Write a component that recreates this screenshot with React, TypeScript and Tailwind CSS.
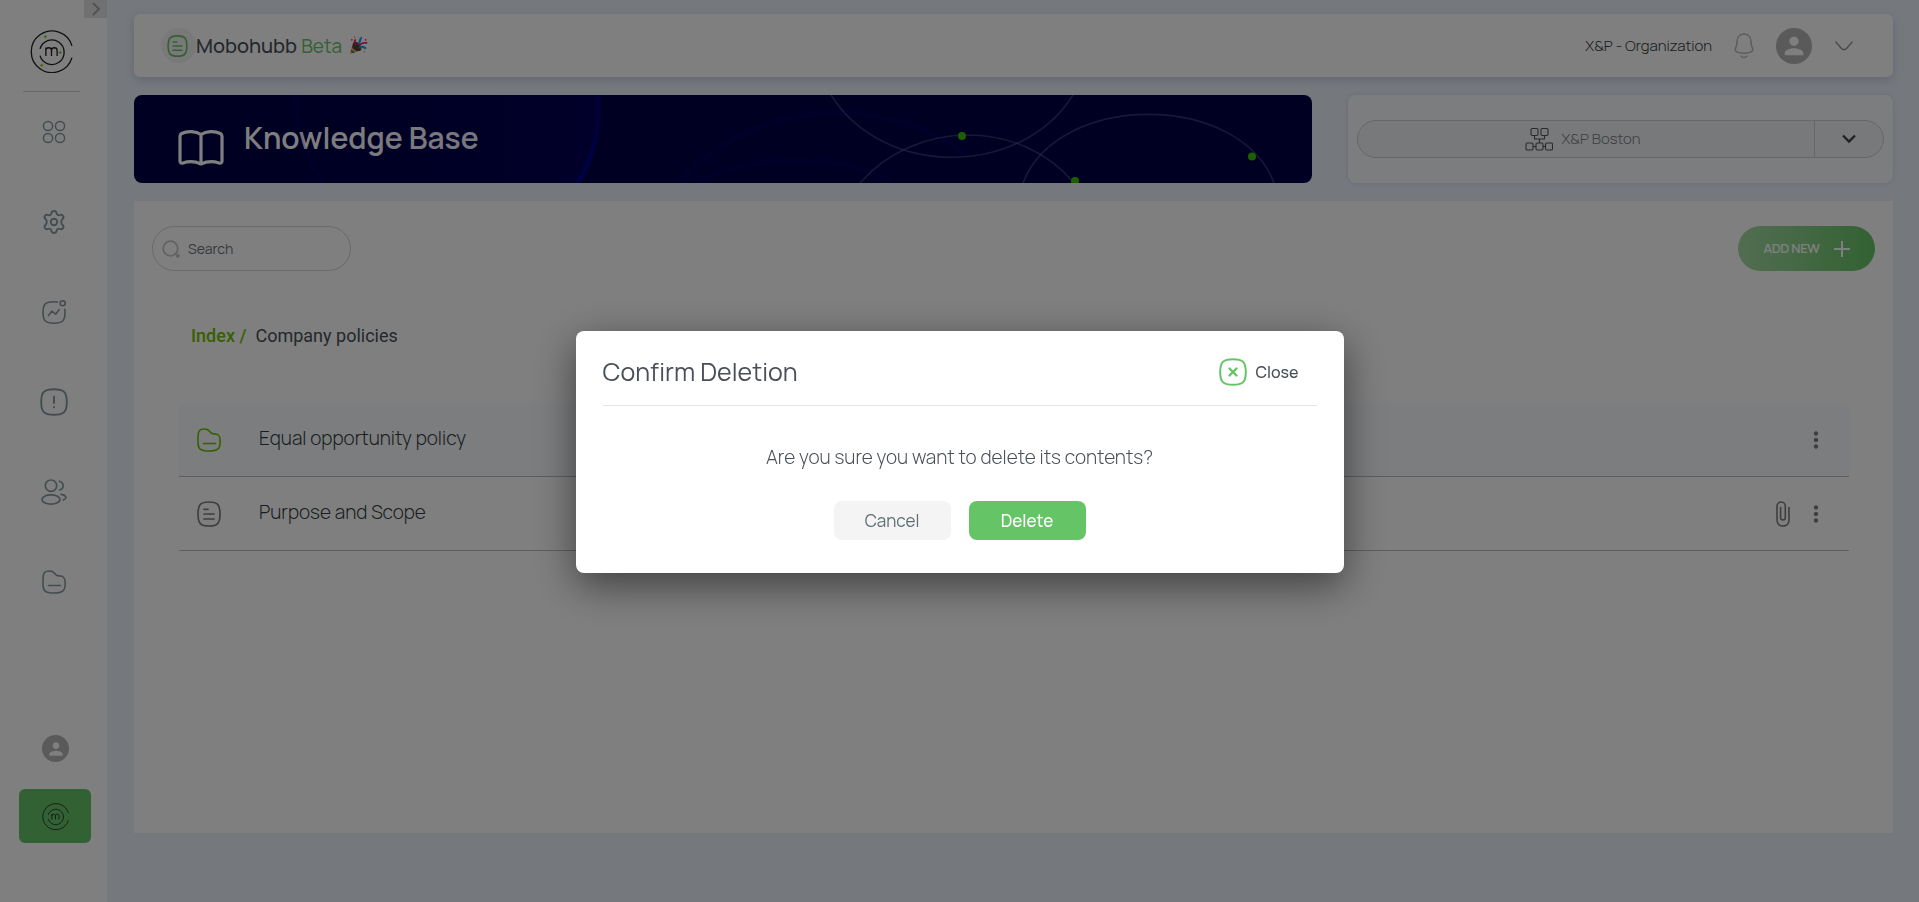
import React from "react";
import { MdPerson, MdMoreVert } from "react-icons/md";

const FONT = "font-['Manrope','Inter','Liberation_Sans',sans-serif]";

type IconProps = { className?: string };

function Logo({ className, accents = true }: IconProps & { accents?: boolean }) {
  return (
    <svg viewBox="0 0 42 42" className={className} fill="none" stroke="currentColor" strokeWidth="1.3" aria-hidden="true">
      <path d="M41 15.500A20.300 20.300 0 1 0 41 27" />
      <path d="M9.800 18.500A12 12 0 1 1 9.800 25" />
      <path d="M15.500 25.500v-8.500M15.500 20c0-3.500 5.500-3.500 5.500 0v5.500M21 20c0-3.500 5.500-3.500 5.500 0v5.500" />
      {accents && (
        <path d="M15 5v3M13.500 6.500h3M11.500 33v3M10 34.500h3M29.500 20.500v3M28 22h3" stroke="#7cc31a" strokeWidth="1" />
      )}
    </svg>
  );
}

function DocIcon({ className, weight = 1.7 }: IconProps & { weight?: number }) {
  return (
    <svg viewBox="0 0 24 26" className={className} fill="none" stroke="currentColor" strokeWidth={weight} strokeLinecap="round" aria-hidden="true">
      <path d="M12 1C20.500 1 23 3.500 23 13S20.500 25 12 25 1 22.500 1 13 3.500 1 12 1Z" />
      <path d="M7 8.300h4M7 13h10M7 18h10" />
    </svg>
  );
}

function FolderIcon({ className }: IconProps) {
  return (
    <svg viewBox="0 0 24 24" className={className} fill="none" stroke="currentColor" strokeWidth="1.6" strokeLinecap="round" strokeLinejoin="round" aria-hidden="true">
      <path d="M1 9C1 3 2.500 1 7.500 1c3.500 0 4.500 1.200 5.700 3 1 1.400 1.800 1.900 4 1.900 4.500 0 6 2 6 7.600 0 7-2.200 9.500-11.200 9.500S1 20.500 1 15Z" />
      <path d="M6.500 15.500h12" />
    </svg>
  );
}

function GridIcon({ className }: IconProps) {
  return (
    <svg viewBox="0 0 24 24" className={className} fill="none" stroke="currentColor" strokeWidth="1.500" aria-hidden="true">
      <circle cx="6" cy="6" r="4.600" />
      <circle cx="18" cy="6" r="4.600" />
      <circle cx="6" cy="18" r="4.600" />
      <circle cx="18" cy="18" r="4.600" />
    </svg>
  );
}

function GearIcon({ className }: IconProps) {
  return (
    <svg viewBox="0 0 24 24" className={className} fill="none" stroke="currentColor" strokeWidth="1.900" strokeLinejoin="round" aria-hidden="true">
      <circle cx="12" cy="12" r="3.200" />
      <path d="M9.400 3.200C9.700 1.500 10.700 1 12 1s2.300.500 2.600 2.200c.300 1.800 1.600 2.500 3.200 1.800 1.600-.700 2.600-.300 3.300.900s.600 2.300-.800 3.300c-1.400 1.100-1.400 4.500 0 5.600 1.400 1 1.500 2.100.800 3.300s-1.700 1.600-3.300.900c-1.600-.700-2.900 0-3.200 1.800C14.300 22.500 13.300 23 12 23s-2.300-.500-2.600-2.200c-.300-1.800-1.600-2.500-3.200-1.800-1.600.700-2.600.300-3.300-.900s-.600-2.300.800-3.300c1.400-1.100 1.400-4.500 0-5.600-1.400-1-1.500-2.100-.800-3.300s1.700-1.600 3.300-.900c1.600.700 2.900 0 3.200-1.800Z" />
    </svg>
  );
}

function ActivityIcon({ className }: IconProps) {
  return (
    <svg viewBox="0 0 24 24" className={className} fill="none" stroke="currentColor" strokeWidth="1.600" strokeLinecap="round" strokeLinejoin="round" aria-hidden="true">
      <path d="M15.500 2C14.500 1.800 13.300 1.700 12 1.700 3.500 1.700 1 4 1 12.500S3.500 23.200 12 23.200s11-2.200 11-10.700c0-1.200 0-2.300-.200-3.200" />
      <circle cx="20.700" cy="3.300" r="2.500" />
      <path d="m6.500 15.500 3.300-4.300 3.900 3 3.500-4.600" />
    </svg>
  );
}

function AlertIcon({ className }: IconProps) {
  return (
    <svg viewBox="0 0 28 28" className={className} fill="none" stroke="currentColor" strokeWidth="1.900" strokeLinecap="round" aria-hidden="true">
      <path d="M14 1.200C24 1.200 26.800 4 26.800 14S24 26.800 14 26.800 1.200 24 1.200 14 4 1.200 14 1.200Z" />
      <path d="M14 8.500v6.500M14 19v.200" />
    </svg>
  );
}

function UsersIcon({ className }: IconProps) {
  return (
    <svg viewBox="0 0 26 26" className={className} fill="none" stroke="currentColor" strokeWidth="1.700" strokeLinecap="round" aria-hidden="true">
      <circle cx="10" cy="6.700" r="5.700" />
      <ellipse cx="10" cy="20.500" rx="9" ry="4.600" />
      <path d="M18.500 2.200c4.800 1.500 4.800 7.700.200 8.800M20 15.300c5.600.600 6.300 4.200 2.300 5.700" />
    </svg>
  );
}

function OrgIcon({ className }: IconProps) {
  return (
    <svg viewBox="0 0 28 26" className={className} fill="none" stroke="currentColor" strokeWidth="1.100" aria-hidden="true">
      <rect x="6" y="2.500" width="7" height="7" rx="1.200" />
      <rect x="16" y="2.500" width="7" height="7" rx="1.200" />
      <rect x="1" y="17" width="7" height="7" rx="1.200" />
      <rect x="11" y="17" width="7" height="7" rx="1.200" />
      <rect x="20.500" y="17" width="7" height="7" rx="1.200" />
      <path d="M9.500 9.500v3.500h10V9.500M14.500 13v4M8 20.500h3M18 20.500h2.500" />
    </svg>
  );
}

function BookIcon({ className }: IconProps) {
  return (
    <svg viewBox="0 0 46 36" className={className} fill="none" stroke="currentColor" strokeWidth="3.200" strokeLinejoin="round" aria-hidden="true">
      <path d="M23 4.500C18 1 9 .800 3.700 3.500 2.500 4.200 2 5 2 6.200V31c0 2 1.300 2.600 3 2 5.500-1.800 12.500-1.500 18 1 5.500-2.500 12.500-2.800 18-1 1.700.600 3 0 3-2V6.200c0-1.200-.500-2-1.700-2.700C37 .800 28 1 23 4.500ZM23 4.500V34" />
    </svg>
  );
}

function BellIcon({ className }: IconProps) {
  return (
    <svg viewBox="0 0 20 26" className={className} fill="none" stroke="currentColor" strokeWidth="1.500" strokeLinecap="round" aria-hidden="true">
      <path d="M10 1C5.500 1 3 4.300 3 8.500c0 3.500-.500 4.500-1.400 6.500C.200 18.500 3.500 20.300 10 20.300s9.800-1.800 8.400-5.300C17.500 13 17 12 17 8.500 17 4.300 14.500 1 10 1Z" />
      <path d="M7.200 23.300c1.500 1.500 4.100 1.500 5.600 0" />
    </svg>
  );
}

function PartyIcon({ className }: IconProps) {
  return (
    <svg viewBox="0 0 20 20" className={className} aria-hidden="true">
      <path d="M4 8 1 19 12 15Z" fill="#f5b32d" />
      <path d="M3.500 10 10 15.500l-2.200.8L3 12.300ZM2.300 14.500l4 2.900-2 .7-2.400-2Z" fill="#4a5f9e" />
      <ellipse cx="8.500" cy="11" rx="3.600" ry="5.600" transform="rotate(-42 8.500 11)" fill="#6b3a1e" />
      <path d="M7.500 9.500C5.500 7 5.500 5 7 3.500M10.500 10.500c2-3 5-4 8.700-3" fill="none" stroke="#e8177d" strokeWidth="1.700" />
      <path d="M9.500 8.500C13 7 10 3.500 13.500 1.500M11 12.500c2-2 5-1 6.800 1" fill="none" stroke="#14a4e8" strokeWidth="2.300" />
      <circle cx="3" cy="4" r=".9" fill="#e8177d" />
      <circle cx="17.500" cy="4" r=".9" fill="#e8177d" />
      <circle cx="6" cy="1.200" r=".9" fill="#f5b32d" />
      <circle cx="16" cy="16.500" r=".9" fill="#f5b32d" />
    </svg>
  );
}

function ClipIcon({ className }: IconProps) {
  return (
    <svg viewBox="0 0 14 26" className={className} fill="none" stroke="currentColor" strokeWidth="1.600" strokeLinecap="round" aria-hidden="true">
      <path d="M13 6.500V19c0 3.500-2.500 6-6 6s-6-2.500-6-6V5.200C1 2.800 2.800 1 5 1s4.300 1.800 4.300 4.200v11.600c0 1.200-1 2.200-2.300 2.200s-2.400-1-2.400-2.200V6.500" />
    </svg>
  );
}

function BannerArt({ className }: IconProps) {
  return (
    <svg viewBox="0 0 1178 88" preserveAspectRatio="none" className={className} fill="none" aria-hidden="true">
      <defs>
        <linearGradient id="glow" x1="0" x2="1">
          <stop offset="0" stopColor="#0000a0" stopOpacity="0" />
          <stop offset="1" stopColor="#0000c8" stopOpacity=".2" />
        </linearGradient>
        <linearGradient id="edge" x1="0" x2="0" y1="0" y2="1">
          <stop offset="0" stopColor="#0000c8" stopOpacity=".25" />
          <stop offset="1" stopColor="#0000d8" stopOpacity=".55" />
        </linearGradient>
      </defs>
      <path d="M162 0c0 30 6 62 28 88h252c16-24 24-58 24-88Z" fill="url(#glow)" opacity=".6" />
      <path d="M162 0c0 30 6 62 28 88" stroke="#0000a8" strokeOpacity=".14" strokeWidth="4" />
      <path d="M465 0c1 34-5 64-22 88" stroke="url(#edge)" strokeWidth="4" />
      <path d="M545 88C620 0 760 0 830 60M560 88c60-30 150-30 200 0" stroke="#0000a0" strokeOpacity=".12" strokeWidth="6" />
      <g stroke="#5c6496" strokeOpacity=".5" strokeWidth="1.600">
        <path d="M697 0c52 83 190 83 242 0" />
        <path d="M726 88c56-64 161-64 214 0" />
        <path d="M889 88c34-91 216-92 251 0" />
      </g>
      <g fill="#36c000">
        <circle cx="828" cy="41" r="4" />
        <circle cx="1118" cy="61.500" r="4" />
        <circle cx="941" cy="86" r="4" />
      </g>
    </svg>
  );
}

const NAV = [
  { label: "Dashboard", icon: <GridIcon className="size-6" /> },
  { label: "Settings", icon: <GearIcon className="size-6" /> },
  { label: "Activity", icon: <ActivityIcon className="size-6" /> },
  { label: "Alerts", icon: <AlertIcon className="size-7" /> },
  { label: "People", icon: <UsersIcon className="size-[26px]" /> },
  { label: "Files", icon: <FolderIcon className="size-6" /> },
];

function Sidebar() {
  return (
    <aside className="relative flex w-[107px] shrink-0 flex-col bg-white">
      <button aria-label="Expand menu" className="absolute right-0 top-0 flex h-[18px] w-[23px] items-center justify-center bg-[#e3e3e3] text-[#a4a4a4]">
        <svg viewBox="0 0 10 14" className="h-3.5 w-2.5" fill="none" stroke="currentColor" strokeWidth="2" aria-hidden="true">
          <path d="m2 1 6 6-6 6" />
        </svg>
      </button>
      <a href="#" aria-label="Home" className="ml-[30px] mt-[30px] self-start text-[#222]">
        <Logo className="size-[43px]" />
      </a>
      <hr className="ml-[23px] mt-[18px] w-[57px] border-[#cfd3d6]" />
      <nav className="mt-[18px] flex flex-col gap-[46px] text-[#869aa1]">
        {NAV.map((n) => (
          <a key={n.label} href="#" aria-label={n.label} className="ml-8 flex size-11 items-center justify-center self-start">
            {n.icon}
          </a>
        ))}
      </nav>
      <div className="mt-auto flex flex-col items-start pb-[59px]">
        <a href="#" aria-label="Account" className="ml-[42px] flex size-[27px] items-center justify-center rounded-full bg-[#b4b4b4] text-white">
          <MdPerson className="size-5" />
        </a>
        <a href="#" aria-label="Workspace" className="ml-[19px] mt-[27px] flex h-[54px] w-[72px] items-center justify-center rounded-md bg-[#65c466] text-[#222]">
          <Logo accents={false} className="size-[27px]" />
        </a>
      </div>
    </aside>
  );
}

function Header() {
  return (
    <header className="flex h-[63px] items-center rounded-md bg-white px-[27px] shadow-[0_3px_8px_rgba(120,135,155,0.3)]">
      <span className="flex size-[35px] items-center justify-center rounded-full bg-[#f2f2f2] pr-0.5 text-[#65c466]">
        <DocIcon weight={2} className="h-[22px] w-[21px]" />
      </span>
      <p className="text-[20px] font-medium leading-7 text-[#495057]">
        Mobohubb <span className="text-[19px] font-normal text-[#65c466]">Beta</span>
      </p>
      <PartyIcon className="ml-[7px] size-[19px]" />
      <div className="ml-auto flex items-center">
        <span className="text-[15px] font-light leading-5 text-[#343a40]">X&amp;P - Organization</span>
        <button aria-label="Notifications" className="ml-[22px] text-[#b8b8b8]">
          <BellIcon className="h-[26px] w-5" />
        </button>
        <button aria-label="Profile" className="ml-[22px] flex size-9 items-center justify-center rounded-full bg-[#b4b4b4] text-white">
          <MdPerson className="size-7" />
        </button>
        <button aria-label="Open profile menu" className="ml-[23px] mr-[13px] text-[#8b979e]">
          <svg viewBox="0 0 18 10" className="h-2.5 w-[18px]" fill="none" stroke="currentColor" strokeWidth="1.400" strokeLinecap="round" aria-hidden="true">
            <path d="m1 1 5 6c2 2.300 4 2.300 6 0l5-6" />
          </svg>
        </button>
      </div>
    </header>
  );
}

function Row({ icon, name, active, clip }: { icon: React.ReactNode; name: string; active?: boolean; clip?: boolean }) {
  return (
    <li className={`flex h-[74px] items-center border-b border-[#bcbcbc] pl-[17px] pr-5 ${active ? "bg-[#f7fafd]" : ""}`}>
      <span className="flex w-[26px] justify-center">{icon}</span>
      <a href="#" className="ml-[37px] pb-1 text-[19px] font-light leading-6 text-[#343a40]">{name}</a>
      <div className="ml-auto flex items-center gap-[13px] text-[#7c7c7c]">
        {clip && <button aria-label="Attachment"><ClipIcon className="h-[26px] w-3.5" /></button>}
        <button aria-label={`Actions for ${name}`}><MdMoreVert className="size-[26px]" /></button>
      </div>
    </li>
  );
}

function Dialog() {
  return (
    <div className="fixed inset-0 flex items-start justify-center bg-black/50 pt-[331px]">
      <section role="dialog" aria-modal="true" aria-labelledby="dialog-title" className="w-full max-w-3xl rounded-lg bg-white px-[27px] pb-[33px] shadow-[0_12px_40px_rgba(0,0,0,0.5)]">
        <div className="flex h-[75px] items-center justify-between border-b border-[#e4e4e4] pt-2">
          <h2 id="dialog-title" className="text-[25px] leading-8 text-[#495057]">Confirm Deletion</h2>
          <button className="mr-[18px] flex items-center gap-[9px] text-[16px] font-medium leading-6 text-[#495057]">
            <svg viewBox="0 0 28 28" className="size-7 text-[#65c466]" fill="none" stroke="currentColor" strokeLinecap="round" aria-hidden="true">
              <path d="M14 1.200C24 1.200 26.800 4 26.800 14S24 26.800 14 26.800 1.200 24 1.200 14 4 1.200 14 1.200Z" strokeWidth="2" />
              <path d="m10.500 10.500 7 7M17.500 10.500l-7 7" strokeWidth="2.400" />
            </svg>
            Close
          </button>
        </div>
        <p className="mt-[39px] text-center text-[19px] font-light leading-6 text-[#495057]">Are you sure you want to delete its contents?</p>
        <div className="mt-8 flex justify-center gap-[18px]">
          <button className="h-[39px] w-[117px] rounded-lg bg-[#f4f4f4] text-[17px] text-[#5f6f76]">Cancel</button>
          <button className="h-[39px] w-[117px] rounded-lg bg-[#65c466] text-[17px] font-medium text-white">Delete</button>
        </div>
      </section>
    </div>
  );
}

export default function App() {
  return (
    <div className={`flex min-h-screen bg-[#eaf1fb] ${FONT}`}>
      <Sidebar />
      <main className="flex min-w-0 grow flex-col pb-[69px] pl-[27px] pr-[26px] pt-3.5">
        <Header />
        <div className="mt-[18px] flex gap-9">
          <div className="relative flex h-[88px] grow overflow-hidden rounded-lg bg-[#000046] pl-11 text-white">
            <BannerArt className="absolute inset-0 size-full" />
            <BookIcon className="mt-[35px] h-9 w-[46px]" />
            <h1 className="ml-5 mt-[23px] text-[30px] font-semibold leading-10">Knowledge Base</h1>
          </div>
          <div className="flex w-[545px] shrink-0 items-center rounded-lg bg-[#f9fafc] px-[9px] shadow-[0_0_4px_rgba(150,165,190,0.3)]">
            <div className="flex h-[38px] grow rounded-full border border-[#ccced2] bg-[#f1f2f4]">
              <button className="flex grow items-center justify-center gap-2 pr-1.5 text-[15px] font-light text-[#7c8184]">
                <OrgIcon className="h-[26px] w-7 text-[#555]" />
                X&amp;P Boston
              </button>
              <button aria-label="Choose location" className="flex w-[69px] items-center justify-center border-l border-[#ccced2] text-[#444]">
                <svg viewBox="0 0 14 10" className="h-2.5 w-3.5" fill="none" stroke="currentColor" strokeWidth="2.400" aria-hidden="true">
                  <path d="m1 1.500 6 6 6-6" />
                </svg>
              </button>
            </div>
          </div>
        </div>
        <section className="mt-[18px] grow bg-white">
          <div className="flex items-center justify-between pl-[18px] pr-[18px] pt-[25px]">
            <label className="flex h-[45px] w-[199px] items-center gap-2 rounded-full border border-[#cfd3d6] pl-[9px]">
              <svg viewBox="0 0 18 18" className="size-[18px] shrink-0 text-[#c4c4c4]" fill="none" stroke="currentColor" strokeWidth="1.800" aria-hidden="true">
                <circle cx="8.500" cy="8.500" r="7.300" />
                <circle cx="15.800" cy="15.800" r="1.200" fill="currentColor" />
              </svg>
              <input type="text" aria-label="Search" placeholder="Search" className="w-full min-w-0 bg-transparent pr-4 text-[14px] outline-none placeholder:text-[#6c757d]" />
            </label>
            <button className="flex h-[45px] w-[137px] items-center justify-center gap-3.5 rounded-full bg-linear-to-r from-[#a3dba3] to-[#65c466] text-[13px] font-semibold tracking-tight text-white">
              ADD NEW
              <svg viewBox="0 0 16 16" className="size-4" stroke="currentColor" strokeWidth="2" aria-hidden="true">
                <path d="M8 0v16M0 8h16" />
              </svg>
            </button>
          </div>
          <nav aria-label="Breadcrumb" className="ml-[57px] mt-[53px] flex gap-[9px] font-['Roboto',sans-serif] text-[18px] leading-6 text-[#495057]">
            <a href="#" className="font-medium text-[#70bf00]">Index /</a>
            <span>Company policies</span>
          </nav>
          <ul className="ml-[45px] mr-[44px] mt-[55px]">
            <Row active name="Equal opportunity policy" icon={<FolderIcon className="size-6 text-[#70bf00]" />} />
            <Row clip name="Purpose and Scope" icon={<DocIcon className="h-[26px] w-6 text-[#7c7c7c]" />} />
          </ul>
        </section>
      </main>
      <Dialog />
    </div>
  );
}
